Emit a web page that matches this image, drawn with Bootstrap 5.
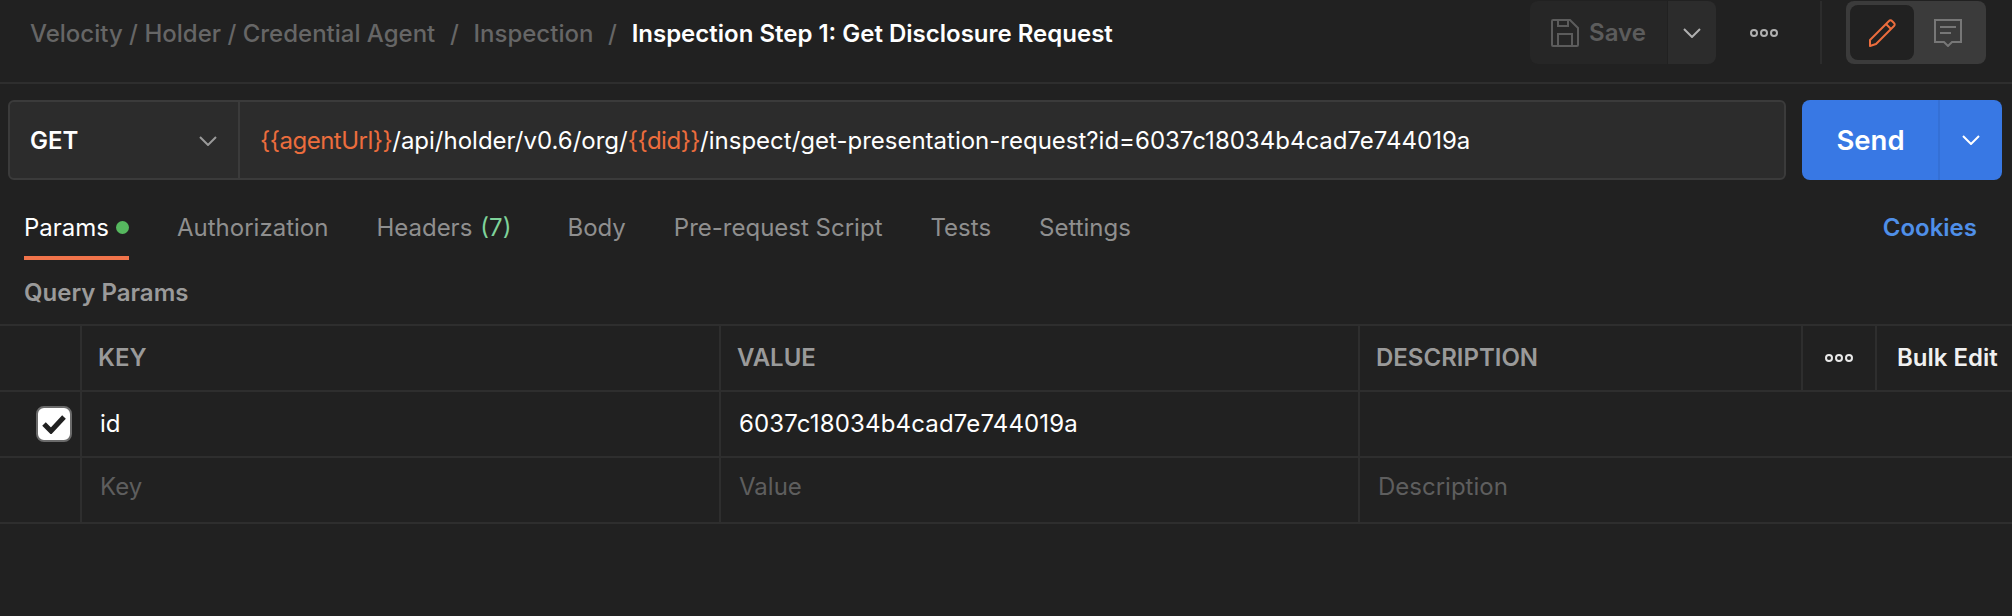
<!DOCTYPE html>
<html lang="en">
<head>
  <meta charset="UTF-8" />
  <meta name="viewport" content="width=device-width, initial-scale=1.0" />
  <title>Inspection Step 1: Get Disclosure Request</title>
  <link href="https://cdn.jsdelivr.net/npm/bootstrap@5.3.3/dist/css/bootstrap.min.css" rel="stylesheet" />
  <style>
    body { background: #212121; color: #fff; font-family: Inter, "Liberation Sans", sans-serif; font-size: 24px; overflow: hidden; }
    svg { display: block; }

    .top-bar { height: 84px; padding: 2px 26px 19px 30px; border-bottom: 2px solid #2e2e2e; }
    .crumbs { font-weight: 500; color: #666; line-height: 32px; padding-top: 16px; white-space: nowrap; }
    .crumbs i { font-style: normal; margin: 0 14.7px; }
    .crumbs b { font-weight: 600; color: #fff; }
    .save-btn { width: 137px; height: 63px; background: #262626; border-radius: 8px 0 0 8px; color: #5c5c5c; font-weight: 600; gap: 10px; }
    .save-caret { width: 48px; height: 63px; margin-left: 1px; background: #2c2c2c; border-radius: 0 8px 8px 0; }
    .more-btn { width: 104px; height: 63px; padding-right: 8px; }
    .v-rule { width: 2px; height: 63px; background: #2c2c2c; margin-right: 24px; }
    .mode-switch { width: 140px; height: 63px; padding: 4px; background: #3b3b3b; border-radius: 8px; }
    .mode-on { width: 64px; height: 55px; background: #212121; border-radius: 8px; }
    .mode-off { flex: 1; }

    .request-row { padding: 16px 10px 0 8px; gap: 16px; }
    .url-box { height: 80px; flex: 1; background: #2c2c2c; border: 2px solid #3b3b3b; border-radius: 6px; }
    .method { width: 230px; border-right: 2px solid #3b3b3b; padding: 2px 21px 0 20px; font-weight: 600; }
    .url-text { padding: 2px 0 0 20px; white-space: nowrap; }
    .url-text span { color: #ec6d3d; letter-spacing: -.5px; }
    .send-btn { width: 137px; height: 80px; padding-top: 8px; background: #3878e4; color: #fff; font-size: 27.5px; font-weight: 600; border: 0; border-radius: 8px 0 0 8px; }
    .send-caret { width: 64px; height: 80px; background: #3878e4; border: 0; border-left: 2px solid #3470d6; border-radius: 0 8px 8px 0; }

    .tab-row { margin-top: 20px; padding: 0 35px 0 24px; gap: 48px; }
    .tab-item { height: 60px; padding: 12px 0; line-height: 32px; color: #8f8f8f; border-bottom: 4px solid transparent; white-space: nowrap; }
    .tab-item.on { color: #fff; border-bottom-color: #f0734a; }
    .tab-dot { display: inline-block; width: 13px; height: 13px; border-radius: 50%; background: #56b85f; margin-left: 7px; vertical-align: 2px; }
    .tab-count { color: #7fd39a; margin-left: 8px; margin-right: 8px; }
    .cookies { color: #4f8fe8; font-weight: 600; line-height: 32px; padding-top: 12px; }

    .query-title { padding: 17px 24px 15px; line-height: 32px; color: #9a9a9a; font-weight: 600; }

    .param-grid { table-layout: fixed; width: 2012px; border-collapse: collapse; }
    .param-grid td, .param-grid th { height: 66px; padding: 0 0 0 18px; border: 2px solid #2e2e2e; border-left: 0; border-right: 0; font-weight: 400; vertical-align: middle; white-space: nowrap; }
    .param-grid td + td, .param-grid th + th { border-left: 2px solid #2e2e2e; }
    .param-grid th { color: #9a9a9a; font-weight: 600; padding-left: 16px; }
    .param-grid th.bulk { color: #f0f0f0; padding-left: 20px; }
    .param-grid th.dots { padding: 0; }
    .param-grid .hint { color: #5e5e5e; padding-bottom: 6px; }
    .param-grid .val-text { letter-spacing: .15px; }
    .param-grid td.box-cell { padding: 0 0 0 36px; }
    .tick-box { width: 36px; height: 36px; background: #fff; border: 2px solid #6b6b6b; border-radius: 8px; }
  </style>
</head>
<body>
  <div class="top-bar d-flex justify-content-between">
    <div class="crumbs">Velocity / Holder / Credential Agent<i>/</i>Inspection<i>/</i><b>Inspection Step 1: Get Disclosure Request</b></div>
    <div class="d-flex align-items-center">
      <div class="save-btn d-flex align-items-center justify-content-center">
        <svg width="28" height="28" viewBox="0 0 28 28" fill="none" stroke="#5c5c5c" stroke-width="2"><path d="M2 1h17l8 8v17a1 1 0 0 1-1 1H2a1 1 0 0 1-1-1V2a1 1 0 0 1 1-1z"/><path d="M7 1v6h10V1"/><path d="M7 27V15h14v12"/></svg>
        <span>Save</span>
      </div>
      <div class="save-caret d-flex align-items-center justify-content-center">
        <svg width="18" height="10" viewBox="0 0 18 10" fill="none" stroke="#b0b0b0" stroke-width="2"><path d="M1 1l8 8 8-8"/></svg>
      </div>
      <div class="more-btn d-flex align-items-center justify-content-center">
        <svg width="28" height="8" viewBox="0 0 28 8" fill="none" stroke="#b0b0b0" stroke-width="2"><circle cx="4" cy="4" r="3"/><circle cx="14" cy="4" r="3"/><circle cx="24" cy="4" r="3"/></svg>
      </div>
      <div class="v-rule"></div>
      <div class="mode-switch d-flex">
        <div class="mode-on d-flex align-items-center justify-content-center">
          <svg width="28" height="28" viewBox="0 0 28 28" fill="none" stroke="#ec6d3d" stroke-width="2" stroke-linejoin="round"><path d="M21 2a2 2 0 0 1 3 0l2 2a2 2 0 0 1 0 3L8 25l-6 2 0-6z"/><path d="M18 5l5 5"/></svg>
        </div>
        <div class="mode-off d-flex align-items-center justify-content-center">
          <svg width="28" height="28" viewBox="0 0 28 28" fill="none" stroke="#777" stroke-width="2"><path d="M1 1h26v22H18l-4 4-4-4H1z"/><path d="M6 8h16M6 14h11"/></svg>
        </div>
      </div>
    </div>
  </div>

  <div class="request-row d-flex">
    <div class="url-box d-flex align-items-center">
      <div class="method h-100 d-flex align-items-center justify-content-between">
        <span>GET</span>
        <svg width="18" height="10" viewBox="0 0 18 10" fill="none" stroke="#9a9a9a" stroke-width="2"><path d="M1 1l8 8 8-8"/></svg>
      </div>
      <div class="url-text"><span>{{agentUrl}}</span>/api/holder/v0.6/org/<span>{{did}}</span>/inspect/get-presentation-request?id=6037c18034b4cad7e744019a</div>
    </div>
    <div class="btn-group">
      <button type="button" class="btn send-btn">Send</button>
      <button type="button" class="btn send-caret d-flex align-items-center justify-content-center">
        <svg width="18" height="10" viewBox="0 0 18 10" fill="none" stroke="#fff" stroke-width="2"><path d="M1 1l8 8 8-8"/></svg>
      </button>
    </div>
  </div>

  <div class="tab-row d-flex">
    <div class="tab-item on">Params<span class="tab-dot"></span></div>
    <div class="tab-item">Authorization</div>
    <div class="tab-item">Headers<span class="tab-count">(7)</span></div>
    <div class="tab-item">Body</div>
    <div class="tab-item">Pre-request Script</div>
    <div class="tab-item">Tests</div>
    <div class="tab-item">Settings</div>
    <div class="cookies ms-auto">Cookies</div>
  </div>

  <div class="query-title">Query Params</div>

  <table class="param-grid">
    <colgroup>
      <col style="width:81px" /><col style="width:639px" /><col style="width:639px" /><col style="width:443px" /><col style="width:74px" /><col style="width:136px" />
    </colgroup>
    <tr>
      <th></th>
      <th>KEY</th>
      <th>VALUE</th>
      <th>DESCRIPTION</th>
      <th class="dots"><svg class="mx-auto" width="28" height="8" viewBox="0 0 28 8" fill="none" stroke="#e8e8e8" stroke-width="2"><circle cx="4" cy="4" r="3"/><circle cx="14" cy="4" r="3"/><circle cx="24" cy="4" r="3"/></svg></th>
      <th class="bulk">Bulk Edit</th>
    </tr>
    <tr>
      <td class="box-cell">
        <div class="tick-box d-flex align-items-center justify-content-center">
          <svg width="24" height="20" viewBox="0 0 24 20" fill="none" stroke="#212121" stroke-width="5"><path d="M2 10l7 7L22 3"/></svg>
        </div>
      </td>
      <td>id</td>
      <td class="val-text">6037c18034b4cad7e744019a</td>
      <td colspan="3"></td>
    </tr>
    <tr>
      <td></td>
      <td class="hint">Key</td>
      <td class="hint">Value</td>
      <td class="hint" colspan="3">Description</td>
    </tr>
  </table>

  <script src="https://cdn.jsdelivr.net/npm/bootstrap@5.3.3/dist/js/bootstrap.bundle.min.js"></script>
</body>
</html>
